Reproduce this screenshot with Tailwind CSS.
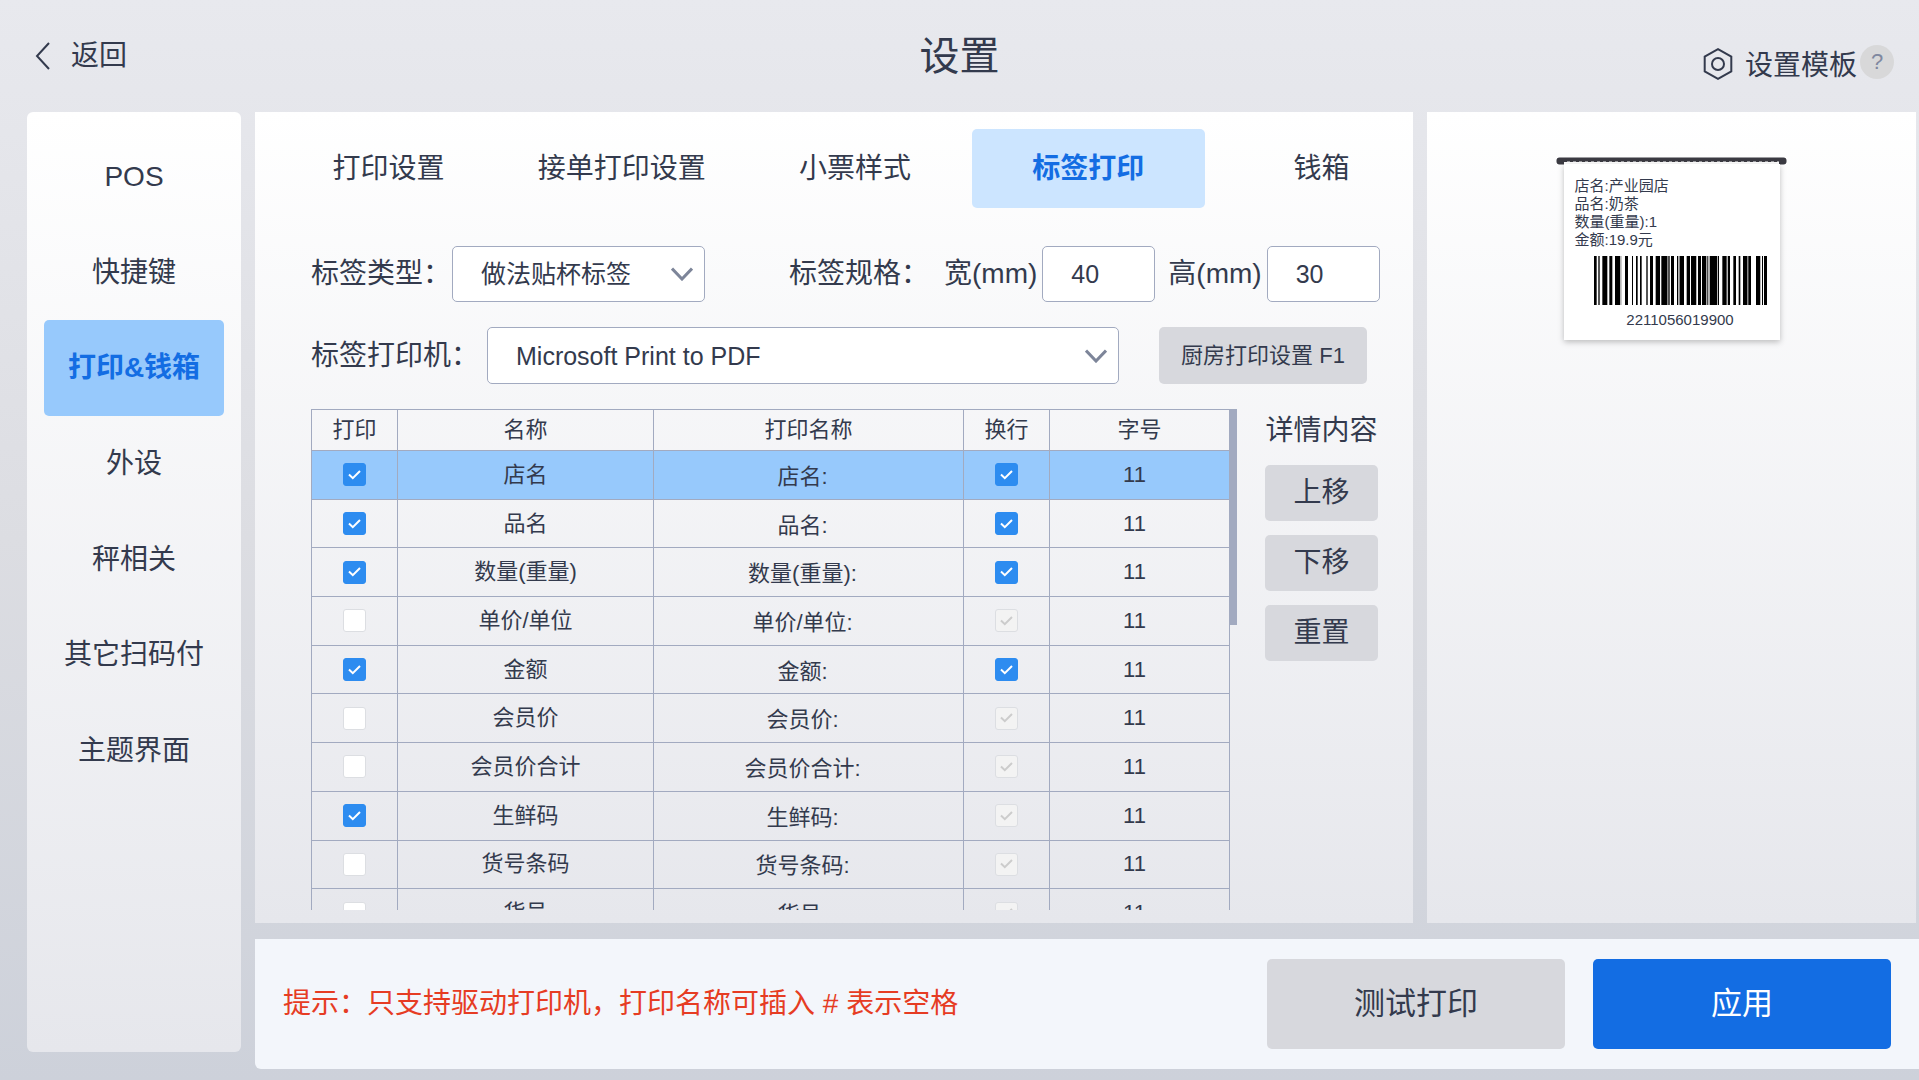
<!DOCTYPE html>
<html lang="zh-CN">
<head>
    <meta charset="UTF-8">
    <meta name="viewport" content="width=device-width, initial-scale=1.0">
    <title>设置</title>
    <script src="https://cdn.jsdelivr.net/npm/@tailwindcss/browser@4"></script>
    <style>
        body {
            font-family: 'Liberation Sans', 'Noto Sans CJK SC', sans-serif;
        }
    </style>
</head>
<body class="h-screen flex flex-col overflow-hidden bg-linear-to-b from-[#e8e9ee] via-[#dcdde2] to-[#cdd1da] text-[#333a4d] text-[28px] leading-10">

    <!-- Шапка -->
    <header class="h-28 shrink-0 grid grid-cols-3 items-center px-[25px]">
        <a href="#" class="flex items-center gap-5 pl-[10px]">
            <svg class="w-4 h-7" viewBox="0 0 16 28" fill="none" stroke="#333a4d" stroke-width="2"><path d="M14 1 2 14l12 13"/></svg>
            返回
        </a>
        <h1 class="text-[40px] text-center">设置</h1>
        <div class="flex items-center justify-end gap-[3px] pt-5">
            <a href="#" class="flex items-center gap-3">
                <svg class="w-[30px] h-8 mb-1" viewBox="0 0 30 32" fill="none" stroke="#333a4d" stroke-width="2"><path d="M15 1.200 28.300 8.500v15L15 30.800 1.700 23.500v-15z"/><circle cx="15" cy="16" r="6"/></svg>
                设置模板
            </a>
            <button class="w-[34px] h-[34px] mb-2 rounded-full bg-[#d8d8d9] text-[#8088a0] text-[22px] leading-[34px]">?</button>
        </div>
    </header>

    <div class="flex-1 min-h-0 flex gap-[14px] pl-[27px]">
        <!-- Боковое меню -->
        <nav class="w-[214px] shrink-0 mb-7 rounded-md bg-linear-to-b from-white to-[#e6e7ec] px-[17px] pt-[17px]">
            <div class="h-[670px] flex flex-col text-center">
                <a href="#" class="flex-1 flex items-center justify-center">POS</a>
                <a href="#" class="flex-1 flex items-center justify-center">快捷键</a>
                <a href="#" class="flex-1 flex items-center justify-center rounded-[5px] bg-[#97c9fc] text-[#136de3] font-bold">打印&amp;钱箱</a>
                <a href="#" class="flex-1 flex items-center justify-center">外设</a>
                <a href="#" class="flex-1 flex items-center justify-center">秤相关</a>
                <a href="#" class="flex-1 flex items-center justify-center">其它扫码付</a>
                <a href="#" class="flex-1 flex items-center justify-center">主题界面</a>
            </div>
        </nav>

        <div class="flex-1 min-w-0 flex flex-col gap-4 pb-[11px]">
            <div class="flex-1 min-h-0 flex gap-[14px] pr-[3px]">
                <main class="flex-1 min-w-0 flex flex-col overflow-hidden bg-linear-to-b from-white to-[#e6e7ec] pt-[17px] pb-[13px]">
                    <div class="-mr-[25px] ml-[17px] grid grid-cols-5 shrink-0">
                        <button class="h-[79px]">打印设置</button>
                        <button class="h-[79px]">接单打印设置</button>
                        <button class="h-[79px]">小票样式</button>
                        <button class="h-[79px] rounded-[5px] bg-[#cce5ff] text-[#136de3] font-bold">标签打印</button>
                        <button class="h-[79px]">钱箱</button>
                    </div>

                    <div class="flex items-center mt-[38px] pl-14 shrink-0">
                        <label for="label_type">标签类型：</label>
                        <div class="grid w-[253px] ml-px">
                            <select id="label_type" class="col-start-1 row-start-1 h-14 pl-7 appearance-none border border-[#a2aac0] rounded-[5px] bg-white text-[25px]">
                                <option>做法贴杯标签</option>
                            </select>
                            <svg class="col-start-1 row-start-1 justify-self-end self-center w-[22px] h-[14px] mr-3 pointer-events-none" viewBox="0 0 22 14" fill="none" stroke="#7d8599" stroke-width="3"><path d="M1 1.500 11 12 21 1.500"/></svg>
                        </div>
                        <span class="ml-[84px]">标签规格：</span>
                        <label for="label_width" class="ml-[15px]">宽(mm)</label>
                        <input type="text" id="label_width" value="40" class="w-[113px] h-14 ml-[5px] pl-7 border border-[#a2aac0] rounded-[5px] bg-white text-[25px]">
                        <label for="label_height" class="ml-[13px]">高(mm)</label>
                        <input type="text" id="label_height" value="30" class="w-[113px] h-14 ml-[5px] pl-7 border border-[#a2aac0] rounded-[5px] bg-white text-[25px]">
                    </div>

                    <div class="flex items-center mt-[25px] pl-14 shrink-0">
                        <label for="printer">标签打印机：</label>
                        <div class="grid w-[632px] ml-2">
                            <select id="printer" class="col-start-1 row-start-1 h-[57px] pl-7 appearance-none border border-[#a2aac0] rounded-[5px] bg-white text-[25px]">
                                <option>Microsoft Print to PDF</option>
                            </select>
                            <svg class="col-start-1 row-start-1 justify-self-end self-center w-[22px] h-[14px] mr-3 pointer-events-none" viewBox="0 0 22 14" fill="none" stroke="#7d8599" stroke-width="3"><path d="M1 1.500 11 12 21 1.500"/></svg>
                        </div>
                        <button class="w-[208px] h-[57px] ml-10 rounded-[5px] bg-[#d7d8dd] text-[22px]">厨房打印设置 F1</button>
                    </div>

                    <div class="flex-1 min-h-0 flex mt-[25px] pl-14">
                        <div class="flex items-start overflow-hidden">
                            <table class="w-[919px] h-[529px] table-fixed border-collapse text-[22px] leading-8 text-center">
                                <colgroup>
                                    <col class="w-[86px]">
                                    <col class="w-[256px]">
                                    <col class="w-[310px]">
                                    <col class="w-[86px]">
                                    <col class="w-[180px]">
                                </colgroup>
                                <thead>
                                    <tr class="h-[41px]">
                                        <th class="border border-[#a2aac0] font-normal">打印</th>
                                        <th class="border border-[#a2aac0] font-normal">名称</th>
                                        <th class="border border-[#a2aac0] font-normal">打印名称</th>
                                        <th class="border border-[#a2aac0] font-normal">换行</th>
                                        <th class="border border-[#a2aac0] font-normal">字号</th>
                                    </tr>
                                </thead>
                                <tbody id="rows"></tbody>
                            </table>
                            <div class="w-2 h-[216px] -ml-px shrink-0 bg-[#a2aac0]"></div>
                        </div>
                        <div class="w-[113px] ml-7 shrink-0 flex flex-col gap-[14px]">
                            <h2 class="h-[42px] pt-[2px] text-center">详情内容</h2>
                            <button class="h-14 rounded-[5px] bg-[#d7d8dd]">上移</button>
                            <button class="h-14 rounded-[5px] bg-[#d7d8dd]">下移</button>
                            <button class="h-14 rounded-[5px] bg-[#d7d8dd]">重置</button>
                        </div>
                    </div>
                </main>

                <!-- Предпросмотр этикетки -->
                <aside class="w-[489px] shrink-0 flex flex-col items-center bg-linear-to-b from-white to-[#e6e7ec] pt-[45px]">
                    <svg class="w-[231px] h-2" viewBox="0 0 231 8"><rect x="0.500" y="0.500" width="230" height="7" rx="3" fill="#3b3a42"/><path d="M8 8V4.500h215V8z" fill="#fff"/><path d="M8 4.500h215" stroke="#3b3a42" stroke-dasharray="3 3"/></svg>
                    <div class="w-[216px] h-[176px] -mt-px pt-[13px] pl-[11px] bg-white shadow-[0_2px_6px_rgba(0,0,0,0.25)] text-[15px] leading-[18px]">
                        <p>店名:产业园店</p>
                        <p>品名:奶茶</p>
                        <p>数量(重量):1</p>
                        <p>金额:19.9元</p>
                        <svg class="w-[173px] h-[49px] mt-[7px] ml-[19px]" viewBox="0 0 519 147" preserveAspectRatio="none">
                            <path fill="#b5b5b5" d="M78 0h5v147h-5zM220 0h3v147h-3zM252 0h5v147h-5zM306 0h3v147h-3zM341 0h4v147h-4zM369 0h4v147h-4zM399 0h4v147h-4zM460 0h4v147h-4zM498 0h3v147h-3z"/>
                            <path d="M0 0h8v147H0zM13 0h4v147h-4zM25 0h15v147H25zM46 0h9v147h-9zM63 0h15v147H63zM93 0h9v147h-9zM114 0h3v147h-3zM126 0h5v147h-5zM138 0h5v147h-5zM157 0h4v147h-4zM168 0h9v147h-9zM185 0h13v147h-13zM202 0h18v147h-18zM223 0h4v147h-4zM231 0h9v147h-9zM249 0h3v147h-3zM257 0h13v147h-13zM278 0h10v147h-10zM291 0h15v147h-15zM312 0h9v147h-9zM324 0h12v147h-12zM338 0h3v147h-3zM347 0h22v147h-22zM372 0h3v147h-3zM385 0h13v147h-13zM402 0h6v147h-6zM418 0h8v147h-8zM434 0h5v147h-5zM447 0h13v147h-13zM463 0h8v147h-8zM486 0h12v147h-12zM504 0h3v147h-3zM510 0h9v147h-9z"/>
                        </svg>
                        <p class="w-[173px] ml-[19px] mt-[6px] text-center">2211056019900</p>
                    </div>
                </aside>
            </div>

            <footer class="h-[130px] shrink-0 flex items-center gap-7 rounded-bl-md bg-[#f3f6fb] pl-7 pr-7">
                <p class="flex-1 text-[#e63c23]">提示：只支持驱动打印机，打印名称可插入 # 表示空格</p>
                <button class="w-[298px] h-[90px] rounded-[5px] bg-[#d7d8dd] text-[31px]">测试打印</button>
                <button class="w-[298px] h-[90px] rounded-[5px] bg-[#136de3] text-white text-[31px]">应用</button>
            </footer>
        </div>
    </div>

    <script>
        const rows = [
            { name: '店名', print: true, wrap: true, active: true },
            { name: '品名', print: true, wrap: true },
            { name: '数量(重量)', print: true, wrap: true },
            { name: '单价/单位', print: false, wrap: false },
            { name: '金额', print: true, wrap: true },
            { name: '会员价', print: false, wrap: false },
            { name: '会员价合计', print: false, wrap: false },
            { name: '生鲜码', print: true, wrap: false },
            { name: '货号条码', print: false, wrap: false },
            { name: '货号', print: false, wrap: false }
        ];

        function checkbox(label, checked, disabled) {
            return `<div class="grid place-items-center">
                <input type="checkbox" aria-label="${label}" ${checked ? 'checked' : ''} ${disabled ? 'disabled' : ''} class="peer col-start-1 row-start-1 w-[23px] h-[23px] appearance-none rounded-[3px] border border-[#dcdee2] bg-white checked:border-[#2d8cf0] checked:bg-[#2d8cf0] disabled:border-[#dcdee2] disabled:bg-[#f3f3f3]">
                <svg class="col-start-1 row-start-1 w-[13px] h-[10px] mr-px pointer-events-none text-transparent peer-checked:text-white peer-disabled:text-[#ccc]" viewBox="0 0 13 10" fill="none" stroke="currentColor" stroke-width="2"><path d="M1 4.500 4.800 8.200 12 1"/></svg>
            </div>`;
        }

        document.getElementById('rows').innerHTML = rows.map(row => `
            <tr class="${row.active ? 'bg-[#97c9fc]' : ''}">
                <td class="border border-[#a2aac0]">${checkbox('打印 ' + row.name, row.print, false)}</td>
                <td class="border border-[#a2aac0]">${row.name}</td>
                <td class="border border-[#a2aac0]"><input type="text" aria-label="打印名称 ${row.name}" value="${row.name}:" class="block w-full h-8 pr-3 mt-1 text-center"></td>
                <td class="border border-[#a2aac0]">${checkbox('换行 ' + row.name, row.wrap, !row.wrap)}</td>
                <td class="border border-[#a2aac0]"><input type="text" aria-label="字号 ${row.name}" value="11" class="block w-full h-8 pr-[10px] text-center"></td>
            </tr>`).join('');
    </script>
</body>
</html>
